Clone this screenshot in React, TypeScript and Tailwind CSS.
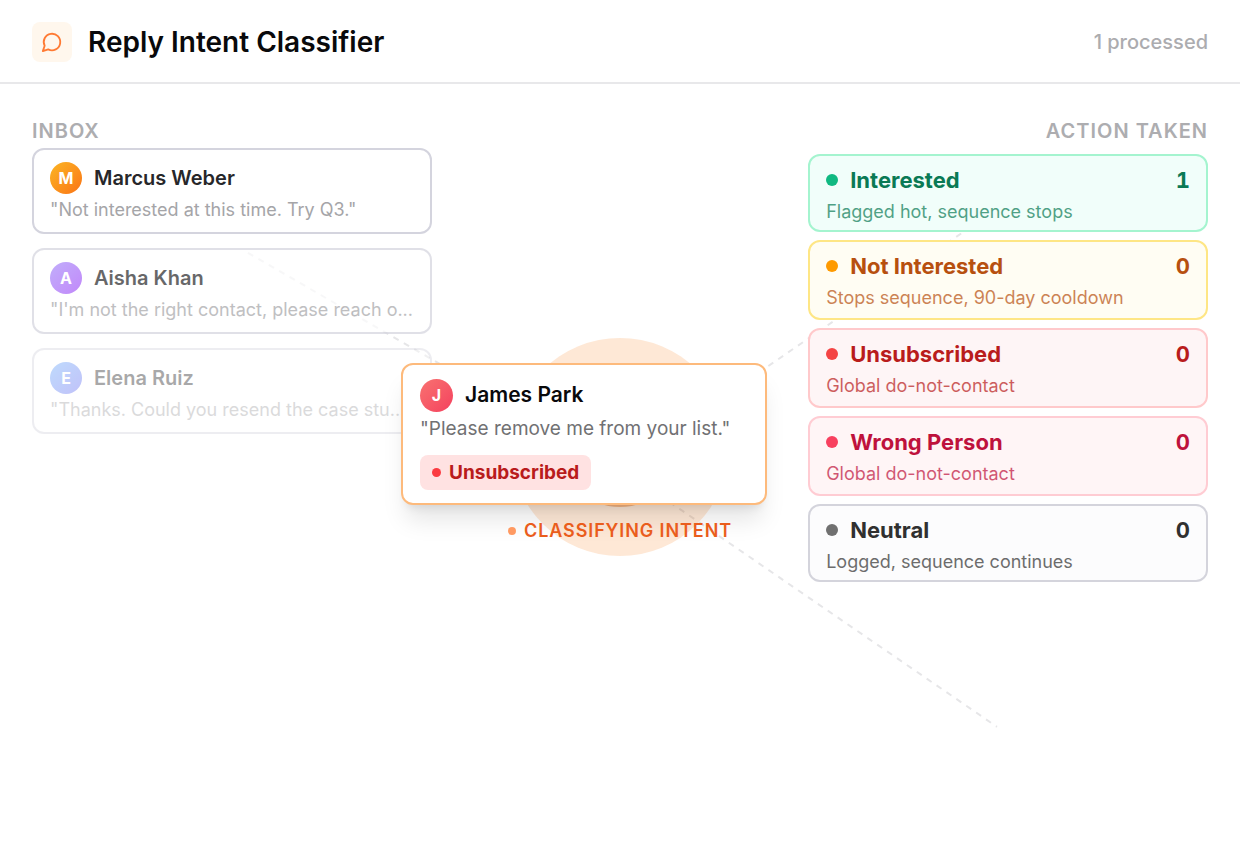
const inbox = [
  {
    name: "Marcus Weber",
    quote: "\"Not interested at this time. Try Q3.\"",
    avatar: "from-[#fbb524] to-[#f97316]",
    fade: "opacity-100",
  },
  {
    name: "Aisha Khan",
    quote: "\"I'm not the right contact, please reach o...",
    avatar: "from-[#a78bfa] to-[#a855f7]",
    fade: "opacity-70",
  },
  {
    name: "Elena Ruiz",
    quote: "\"Thanks. Could you resend the case stu...",
    avatar: "from-[#60a5fa] to-[#6366f1]",
    fade: "opacity-40",
  },
]

const actions = [
  {
    title: "Interested",
    note: "Flagged hot, sequence stops",
    count: 1,
    card: "border-[#a4f4cf] bg-[#f1fefa] text-[#0a7a55]",
    dot: "bg-[#10b981]",
  },
  {
    title: "Not Interested",
    note: "Stops sequence, 90-day cooldown",
    count: 0,
    card: "border-[#fee685] bg-[#fffdf3] text-[#b7500f]",
    dot: "bg-[#fe9a00]",
  },
  {
    title: "Unsubscribed",
    note: "Global do-not-contact",
    count: 0,
    card: "border-[#ffc9cb] bg-[#fef5f6] text-[#b91c1c]",
    dot: "bg-[#f44444]",
  },
  {
    title: "Wrong Person",
    note: "Global do-not-contact",
    count: 0,
    card: "border-[#ffccd3] bg-[#fff5f6] text-[#be123c]",
    dot: "bg-[#f8405f]",
  },
  {
    title: "Neutral",
    note: "Logged, sequence continues",
    count: 0,
    card: "border-[#d4d4dc] bg-[#fcfcfd] text-[#303030]",
    dot: "bg-[#707070]",
  },
]

function BubbleIcon() {
  return (
    <svg
      viewBox="0 0 24 24"
      className="size-[22px] text-[#ff7a33]"
      fill="none"
      stroke="currentColor"
      strokeWidth="2"
      strokeLinecap="round"
      strokeLinejoin="round"
      aria-hidden="true"
    >
      <path d="M7.9 20A9 9 0 1 0 4 16.1L2 22Z" />
    </svg>
  )
}

function Connectors() {
  return (
    <svg className="absolute inset-0 h-full w-full" aria-hidden="true">
      <g stroke="#e6e6e8" strokeWidth="2" strokeDasharray="6 6">
        <line x1="20%" y1="22%" x2="50%" y2="50%" />
        <line x1="50%" y1="50%" x2="80%" y2="16.7%" />
        <line x1="50%" y1="50%" x2="80.4%" y2="83.7%" />
      </g>
    </svg>
  )
}

function Inbox() {
  return (
    <section className="w-[34%]">
      <h2 className="text-xl leading-[30px] font-semibold tracking-wider text-[#adadb0] uppercase">Inbox</h2>
      <ul className="mt-[2px] flex flex-col gap-[14px]">
        {inbox.map((mail) => (
          <li
            key={mail.name}
            className={`rounded-xl border-2 border-[#d4d4de] bg-white px-4 pt-3 pb-[6px] ${mail.fade}`}
          >
            <div className="flex items-center gap-3">
              <span
                className={`flex size-8 items-center justify-center rounded-full bg-gradient-to-br text-base font-bold text-white ${mail.avatar}`}
              >
                {mail.name[0]}
              </span>
              <h3 className="text-xl leading-8 font-semibold text-[#27272a]">{mail.name}</h3>
            </div>
            <p className="text-lg leading-8 whitespace-nowrap text-[#a5a5a8]">{mail.quote}</p>
          </li>
        ))}
      </ul>
    </section>
  )
}

function Actions() {
  return (
    <section className="relative w-[34%]">
      <h2 className="text-right text-xl leading-[30px] font-semibold tracking-wider text-[#adadb0] uppercase">
        Action taken
      </h2>
      <ul className="mt-2 flex flex-col gap-2">
        {actions.map((action) => (
          <li
            key={action.title}
            className={`h-20 rounded-xl border-2 px-4 pt-2 first:h-[78px] last:h-[78px] ${action.card}`}
          >
            <div className="flex items-center gap-3 text-[22px] leading-8 font-bold">
              <span className={`size-3 rounded-full ${action.dot}`} />
              <h3 className="flex-1">{action.title}</h3>
              <span className="tabular-nums">{action.count}</span>
            </div>
            <p className="text-lg leading-8 opacity-70">{action.note}</p>
          </li>
        ))}
      </ul>
    </section>
  )
}

function Classifier() {
  return (
    <>
      {/* Pulse rings around the hub */}
      <div className="absolute top-[254px] left-1/2 flex size-[218px] -translate-x-1/2 items-center justify-center rounded-full bg-[#fb8c30]/20">
        <div className="size-[120px] rounded-full bg-[#f5b685]" />
      </div>

      {/* Message currently being classified */}
      <article className="absolute top-[279px] left-1/2 -ml-[219px] w-[366px] rounded-xl border-2 border-[#fdba7c] bg-white px-[17px] pt-[13px] pb-[13px] shadow-xl">
        <div className="flex items-center gap-3">
          <span className="flex size-[33px] items-center justify-center rounded-full bg-gradient-to-br from-[#f87171] to-[#f43f5e] text-base font-bold text-white">
            J
          </span>
          <h3 className="text-[21px] leading-[34px] font-semibold text-[#09090b]">James Park</h3>
        </div>
        <p className="text-[19px] leading-[34px] text-[#717173]">"Please remove me from your list."</p>
        <p className="mt-[9px] flex w-fit items-center gap-2 rounded-lg bg-[#ffe2e2] px-3 text-[19px] leading-[35px] font-bold text-[#b91c1c]">
          <span className="size-[9px] rounded-full bg-[#fb3b41]" />
          Unsubscribed
        </p>
      </article>

      <p className="absolute top-[432px] left-1/2 flex -translate-x-1/2 items-center gap-2 text-lg leading-[30px] font-semibold tracking-wider whitespace-nowrap text-[#ea5d1c] uppercase">
        <span className="size-2 rounded-full bg-[#ff9a62]" />
        Classifying intent
      </p>
    </>
  )
}

export default function App() {
  return (
    <div className="flex min-h-screen flex-col bg-white font-[Inter,sans-serif]">
      <header className="flex items-center gap-4 border-b-2 border-[#e8e8ea] px-8 pt-[22px] pb-5">
        <span className="flex size-10 items-center justify-center rounded-lg bg-[#fff7ed]">
          <BubbleIcon />
        </span>
        <h1 className="flex-1 text-[28px] leading-10 font-semibold text-[#09090b]">Reply Intent Classifier</h1>
        <p className="text-xl font-medium text-[#acacaf]">1 processed</p>
      </header>

      <main className="relative flex flex-1 justify-between px-8 pt-8">
        <Connectors />
        <Inbox />
        <Actions />
        <Classifier />
      </main>
    </div>
  )
}
